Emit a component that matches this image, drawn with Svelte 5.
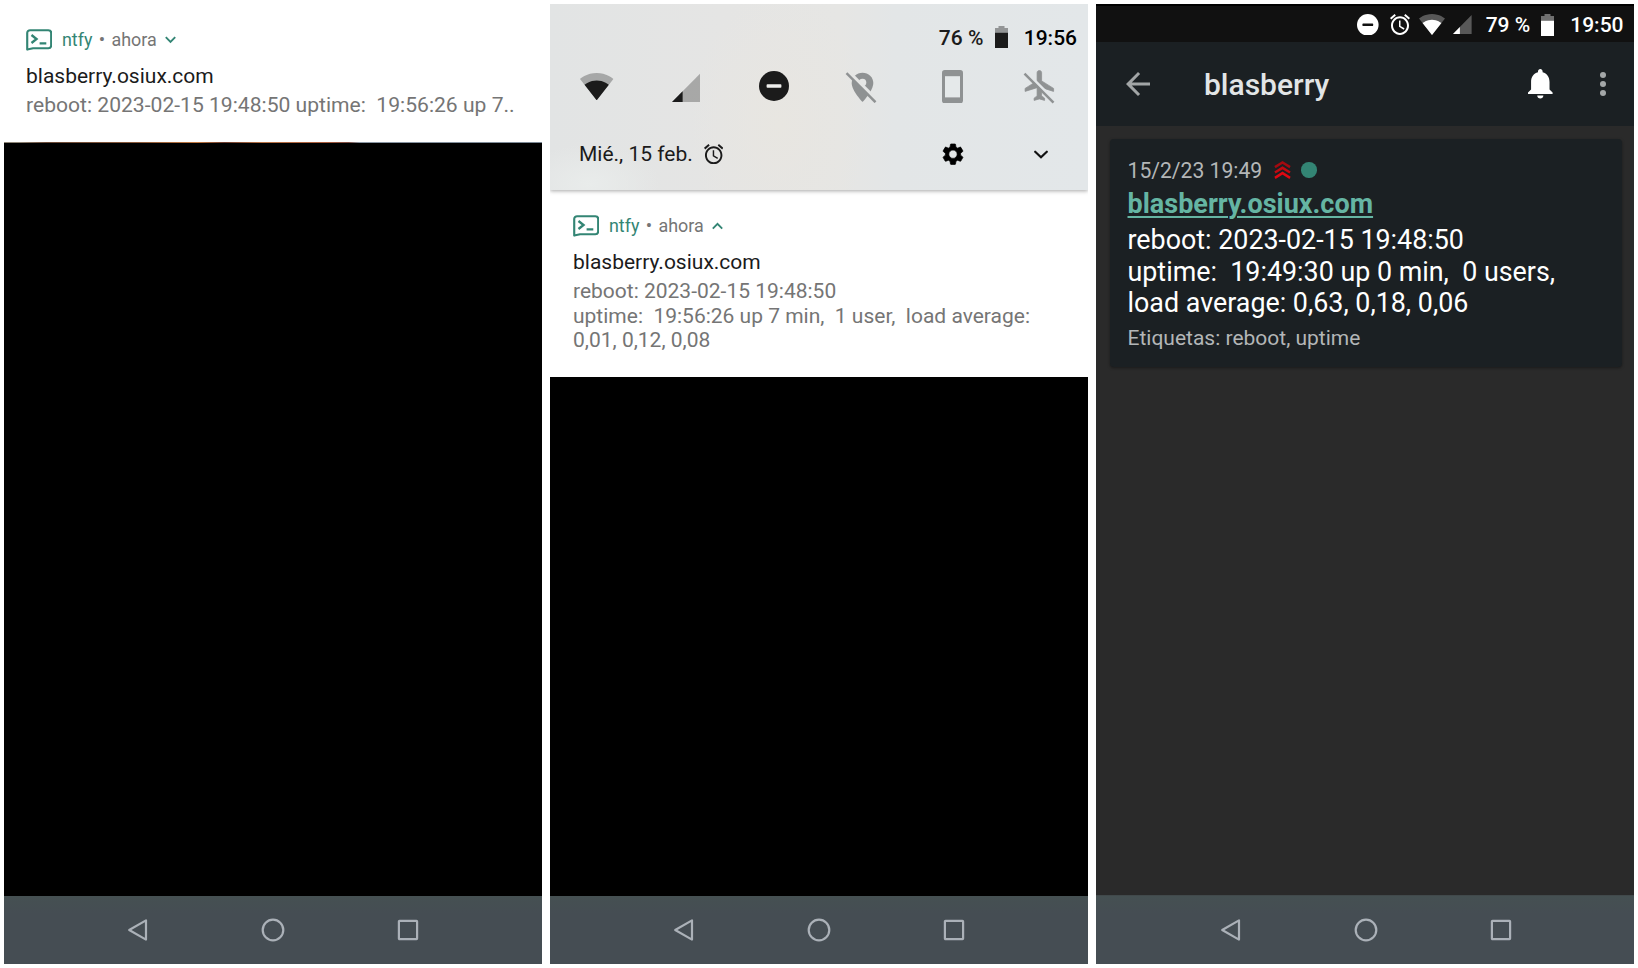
<script>
  const tags = ['reboot', 'uptime'];
</script>

{#snippet navbar()}
  <nav class="navbar">
    <svg width="24" height="24" viewBox="0 0 24 24"><path d="M20 2.4V21.6L3.2 12Z" /></svg>
    <svg width="24" height="24" viewBox="0 0 24 24"><ellipse cx="12" cy="12" rx="10.3" ry="10.3" /></svg>
    <svg width="24" height="24" viewBox="0 0 24 24"><rect x="2.9" y="2.9" width="18.2" height="18.2" rx="0.6" /></svg>
  </nav>
{/snippet}

{#snippet alarm(w, h)}
  <svg width={w} height={h} viewBox="2 1.86 20 20.14" preserveAspectRatio="none" fill="currentColor"><path d="M22 5.72l-4.6-3.86-1.29 1.53 4.6 3.86L22 5.72zM7.88 3.39L6.6 1.86 2 5.71l1.29 1.53 4.59-3.85zM12.5 8H11v6l4.75 2.85.75-1.23-4-2.37V8zM12 4c-4.97 0-9 4.03-9 9s4.02 9 9 9c4.97 0 9-4.03 9-9s-4.03-9-9-9zm0 16c-3.87 0-7-3.13-7-7s3.13-7 7-7 7 3.13 7 7-3.13 7-7 7z" /></svg>
{/snippet}

{#snippet wifi(w, h)}
  <svg width={w} height={h} viewBox="0.36 3 23.28 18.5" preserveAspectRatio="none" fill="currentColor">
    <path opacity=".3" d="M12.01 21.49L23.64 7c-.45-.34-4.93-4-11.64-4C5.28 3 .81 6.66.36 7l11.63 14.49z" />
    <path d="M3.53 10.95l8.46 10.54h.02l8.46-10.54C20.04 10.62 16.81 8 12 8c-4.81 0-8.04 2.62-8.47 2.95z" />
  </svg>
{/snippet}

{#snippet signal(w, h)}
  <svg width={w} height={h} viewBox="2 2 20 20" preserveAspectRatio="none" fill="currentColor">
    <path opacity=".3" d="M2 22h20V2z" />
    <path d="M9.4 14.6L2 22h7.4z" />
  </svg>
{/snippet}

{#snippet dnd(size, bar)}
  <svg width={size} height={size} viewBox="0 0 30 30"><circle cx="15" cy="15" r="15" fill="currentColor" /><rect x="7.6" y="13.3" width="14.8" height="3.4" rx=".8" fill={bar} /></svg>
{/snippet}

{#snippet battery()}
  <svg width="13" height="22" viewBox="0 0 13 22" fill="currentColor">
    <path opacity=".4" d="M3.5 0h6v2H13v5H0V2h3.5z" />
    <path d="M0 6.8h13V22H0z" />
  </svg>
{/snippet}

{#snippet notifHead(open)}
  <div class="nhead">
    <svg class="logo" width="26.4" height="22" viewBox="0 0 26 22" preserveAspectRatio="none" fill="none" stroke="#338574">
      <path stroke-width="2.1" d="M1.2 20.6V4A2.8 2.8 0 0 1 4 1.2h18A2.8 2.8 0 0 1 24.8 4v12.4A2.8 2.8 0 0 1 22 19.2H7z" stroke-linejoin="round" />
      <path stroke-width="2.3" d="M5.4 6l5 4-5 4M13.4 14.4h6.6" />
    </svg>
    <span class="app">ntfy</span><span class="dot">•</span><span class="when">ahora</span>
    <svg class="chev" width="11" height="8" viewBox="0 0 11 8" fill="none" stroke="#338574" stroke-width="1.9">
      {#if open}<path d="M.8 6.6l4.7-4.7 4.7 4.7" />{:else}<path d="M.8 1.2l4.7 4.7 4.7-4.7" />{/if}
    </svg>
  </div>
{/snippet}

<main>
  <section class="phone">
    <div class="notif first">
      {@render notifHead(false)}
      <h2>blasberry.osiux.com</h2>
      <p>reboot: 2023-02-15 19:48:50 uptime:&nbsp; 19:56:26 up 7..</p>
    </div>
    <div class="void edge"></div>
    {@render navbar()}
  </section>

  <section class="phone">
    <div class="shade">
      <div class="status">
        <span>76 %</span>
        {@render battery()}
        <b>19:56</b>
      </div>
      <div class="tiles">
        <span class="t-wifi">{@render wifi(33.4, 27.3)}</span>
        <span class="t-signal">{@render signal(28.7, 29)}</span>
        <span class="t-dnd">{@render dnd(30, '#eeeeec')}</span>
        <span class="off t-pin">
          <svg width="32" height="32" viewBox="0 0 32 32">
            <mask id="pinMask"><rect width="32" height="32" fill="#fff" /><circle cx="17.5" cy="11.6" r="3.8" fill="#000" /><path d="M0 -2.9L35 32.1" stroke="#000" stroke-width="3.4" /></mask>
            <path mask="url(#pinMask)" fill="currentColor" d="M17.5 1.7C11.5 1.7 6.7 6.3 6.7 12c0 8 10.8 19 10.8 19s10.8-11 10.8-19C28.3 6.3 23.5 1.7 17.5 1.7z" />
            <path d="M1.5 2.2L30.5 31.2" stroke="currentColor" stroke-width="2.5" />
          </svg>
        </span>
        <span class="off t-phone">
          <svg width="21" height="33.4" viewBox="0 0 21 33.4"><rect width="21" height="33.4" rx="2.8" fill="currentColor" /><rect x="3" y="6.2" width="15" height="21.2" fill="#e5e9ea" /></svg>
        </span>
        <span class="off t-plane">
          <svg width="32" height="34" viewBox="0 0 32 34">
            <mask id="planeMask"><rect width="32" height="34" fill="#fff" /><path d="M0 -1L35 34" stroke="#000" stroke-width="3" /></mask>
            <g mask="url(#planeMask)"><path fill="currentColor" stroke="currentColor" stroke-width=".5" transform="translate(-.9 -2.6) scale(1.5)" d="M21 16v-2l-8-5V3.500c0-.830-.670-1.500-1.500-1.500S10 2.670 10 3.500V9l-8 5v2l8-2.500V19l-2 1.500V22l3.500-1 3.500 1v-1.500L13 19v-5.500l8 2.500z" /></g>
            <path d="M1.5 3.7L30.5 32.7" stroke="currentColor" stroke-width="2.5" />
          </svg>
        </span>
      </div>
      <div class="daterow">
        <span class="date">Mié., 15 feb.</span>
        {@render alarm(19.4, 20.2)}
        <svg class="gear" width="20" height="20.4" viewBox="2.26 2 19.48 20" fill="#000"><path stroke="#000" stroke-width=".7" stroke-linejoin="round" d="M19.430 12.980c.040-.320.070-.640.070-.980s-.030-.660-.070-.980l2.110-1.650c.190-.150.240-.420.120-.640l-2-3.460c-.120-.220-.390-.300-.610-.220l-2.490 1c-.520-.400-1.080-.730-1.690-.980l-.380-2.650C14.460 2.180 14.250 2 14 2h-4c-.250 0-.460.180-.490.420l-.380 2.650c-.610.250-1.170.590-1.690.980l-2.490-1c-.230-.090-.490 0-.610.220l-2 3.460c-.130.220-.070.490.120.640l2.110 1.650c-.040.320-.070.650-.070.980s.030.660.070.980l-2.110 1.650c-.190.150-.240.420-.120.640l2 3.460c.120.220.390.300.610.220l2.490-1c.520.400 1.080.730 1.690.980l.380 2.650c.030.240.240.420.490.420h4c.250 0 .460-.180.490-.420l.380-2.650c.610-.250 1.170-.590 1.690-.980l2.490 1c.230.090.490 0 .610-.220l2-3.460c.120-.220.070-.490-.120-.640l-2.110-1.650zM12 16.100a4.100 4.100 0 1 1 0-8.200 4.100 4.100 0 0 1 0 8.200z" /></svg>
        <svg class="expand" width="14" height="9" viewBox="0 0 14 9" fill="none" stroke="#111" stroke-width="2.2" stroke-linecap="round"><path d="M1.2 1.700L7 7.200l5.800-5.500" /></svg>
      </div>
    </div>
    <div class="notif second">
      {@render notifHead(true)}
      <h2>blasberry.osiux.com</h2>
      <p>reboot: 2023-02-15 19:48:50<br />uptime:&nbsp; 19:56:26 up 7 min,&nbsp; 1 user,&nbsp; load average:<br />0,01, 0,12, 0,08</p>
    </div>
    <div class="void"></div>
    {@render navbar()}
  </section>

  <section class="phone dark">
    <div class="sysbar">
      {@render dnd(21.6, '#111')}
      <span class="s-alarm">{@render alarm(20, 21)}</span>
      <span class="s-wifi">{@render wifi(26, 21)}</span>
      <span class="s-signal">{@render signal(18.6, 19)}</span>
      <span class="s-pct">79 %</span>
      <span class="s-bat">{@render battery()}</span>
      <b>19:50</b>
    </div>
    <header class="appbar">
      <svg width="24" height="24" viewBox="4 4 16 16" fill="#a2a5a6"><path d="M20 11H7.830l5.590-5.590L12 4l-8 8 8 8 1.410-1.410L7.830 13H20v-2z" /></svg>
      <h1>blasberry</h1>
      <svg class="bell" width="24.6" height="29.6" viewBox="4 2.5 16 19.5" preserveAspectRatio="none" fill="#fff"><path d="M12 22c1.100 0 2-.900 2-2h-4c0 1.100.890 2 2 2zm6-6v-5c0-3.070-1.640-5.640-4.500-6.320V4c0-.830-.670-1.500-1.500-1.500s-1.500.670-1.500 1.500v.680C7.630 5.360 6 7.920 6 11v5l-2 2v1h16v-1l-2-2z" /></svg>
      <svg width="6" height="24" viewBox="0 0 6 24" fill="#a4a7a8"><circle cx="3" cy="3" r="3" /><circle cx="3" cy="12" r="3" /><circle cx="3" cy="21" r="3" /></svg>
    </header>
    <div class="list">
      <article class="card">
        <div class="meta">
          <span>15/2/23 19:49</span>
          <svg class="prio" width="17" height="18" viewBox="0 0 18 18" preserveAspectRatio="none" fill="none" stroke-width="2.6">
            <path stroke="#a30a10" d="M1 6.200l8-4.700 8 4.700" />
            <path stroke="#c00a12" d="M1 11.500l8-4.700 8 4.700" />
            <path stroke="#e00812" d="M1 16.800l8-4.700 8 4.700" />
          </svg>
          <i class="unread"></i>
        </div>
        <h3>blasberry.osiux.com</h3>
        <p class="msg">reboot: 2023-02-15 19:48:50<br />uptime:&nbsp; 19:49:30 up 0 min,&nbsp; 0 users,<br />load average: 0,63, 0,18, 0,06</p>
        <p class="tags">Etiquetas: {tags.join(', ')}</p>
      </article>
    </div>
    {@render navbar()}
  </section>
</main>

<style>
  :global(body) { margin: 0; background: #fff; }
  main {
    box-sizing: border-box; width: 1638px; height: 968px; padding: 4px;
    display: flex; gap: 8px; background: #fff;
    font-family: Roboto, sans-serif; font-size: 21px; overflow: hidden;
  }
  svg { display: block; flex: none; }
  h1, h2, h3, p { margin: 0; font-weight: 400; white-space: nowrap; }
  .phone { width: 538px; height: 960px; display: flex; flex-direction: column; flex: none; background: #fff; }

  .navbar {
    box-sizing: border-box; height: 68px; flex: none; padding: 0 67px 0 66px;
    display: grid; grid-template-columns: repeat(3, 1fr); justify-items: center; align-items: center;
    background: linear-gradient(#455052, #454d53 18px); fill: none; stroke: #abb1b8; stroke-width: 2.2;
    stroke-linejoin: round;
  }

  .notif { box-sizing: border-box; flex: none; }
  .first { height: 138px; padding: 25px 0 0 22px; }
  .second { height: 187px; padding: 25px 0 0 23px; }
  .nhead { display: flex; align-items: center; height: 22px; font-size: 17.9px; line-height: 22px; color: #757575; }
  .app { color: #338574; margin-left: 9.6px; }
  .dot { font-size: 19px; width: 19px; text-align: center; }
  .chev { margin-left: 8px; }
  .notif h2 { margin-top: 13px; font-size: 21px; line-height: 25px; color: #1b1b1b; }
  .notif p { font-size: 21.1px; line-height: 24.6px; color: #757575; margin-top: 4px; }
  .second p { font-size: 21px; }
  .void { flex: 1; background: #000; }
  .edge {
    border-top: 1px solid;
    border-image: linear-gradient(90deg, #8d8577 0 3%, #6a4a38 8%, #8a5a3c 25%, #c27840 36%, #6b3c30 41%, #b97447 48%, #a85a3c 60%, #7b4d44 64%, #8b97a4 66%, #7c8894) 1;
  }

  .shade {
    box-sizing: border-box; height: 186px; flex: none; position: relative; z-index: 1; color: #1b1b1b;
    background:
      radial-gradient(ellipse 90px 130px at 230px 120px, #e8e6e1 0, #e8e6e100 100%),
      radial-gradient(ellipse 70px 40px at 40px 180px, #e9eceb 0, #e9eceb00 100%),
      linear-gradient(90deg, #e2e4e4 0, #e5e5e4 32%, #e6e6e4 54%, #e3e6e7 64%, #e3e7e9 100%);
    box-shadow: 0 1px 4px rgb(0 0 0 / .35);
    clip-path: inset(0 0 -8px 0);
  }
  .status { display: flex; align-items: center; justify-content: flex-end; height: 25px; padding: 21px 11px 0 0; font-weight: 500; }
  .status svg { margin: 0 16px 0 11.3px; position: relative; top: -1px; }
  b { font-weight: 500; color: #000; }
  .tiles { display: grid; grid-template-columns: repeat(6, 88.6px); padding-left: 3px; height: 74px; align-items: center; justify-items: center; }
  .t-wifi { margin: 0 .6px 1.5px 0; }
  .t-signal { margin: 0; }
  .t-dnd { margin-bottom: 1.4px; }
  .t-pin { margin: 0 3.6px 0 0; }
  .t-phone { margin: 0 0 1px 1px; }
  .t-plane { margin: 0 2px 0 0; }
  .off { color: #8f9293; }
  .daterow { display: flex; align-items: center; height: 60px; padding-left: 29px; }
  .date { margin-right: 11px; }
  .gear { margin-left: 220px; overflow: visible; }
  .expand { margin-left: 71px; }

  .dark { background: #2a2a2a; color: #fff; }
  .dark b { color: #fff; }
  .sysbar {
    box-sizing: border-box; height: 38px; flex: none; display: flex; align-items: center; padding: 1px 10.5px 0 0;
    justify-content: flex-end; background: #111; border-top: 2px solid #000; font-weight: 500;
  }
  .s-alarm { margin-left: 11.5px; }
  .s-wifi { margin-left: 9px; }
  .s-signal { margin-left: 8px; }
  .s-pct { margin-left: 14px; }
  .s-bat { margin: 0 16px 0 11px; }
  .appbar { box-sizing: border-box; height: 84px; flex: none; display: flex; align-items: center; background: #1b2023; padding: 0 28px 0 30px; }
  h1 { margin-left: 54px; font-size: 30px; font-weight: 500; color: #e2e5e6; flex: 1; }
  .bell { margin-right: 47px; }
  .list { flex: 1; padding: 13px 12px 0 14px; }
  .card { box-sizing: border-box; height: 227.5px; padding: 18px 0 0 17.5px; background: #1b2023; border-radius: 4px; box-shadow: 0 1px 3px rgb(0 0 0 / .4); }
  .meta { display: flex; align-items: center; height: 26px; color: #b3b6b7; font-size: 21.15px; }
  .prio { margin-left: 12px; }
  .unread { width: 15.5px; height: 15.5px; border-radius: 50%; background: #338574; margin-left: 10px; }
  h3 { font-size: 27px; line-height: 32px; margin-top: 5px; font-weight: 700; color: #65b5a3; text-decoration: underline; text-decoration-thickness: 1.5px; text-underline-offset: 3px; }
  .msg { font-size: 26.85px; line-height: 31.5px; margin-top: 5px; }
  .tags { font-size: 21px; line-height: 25px; margin-top: 6px; color: #b3b6b7; }
  .dark .navbar { height: 69px; border-top: 1px solid #41494b; padding: 0 66px 0 67px; }
</style>
